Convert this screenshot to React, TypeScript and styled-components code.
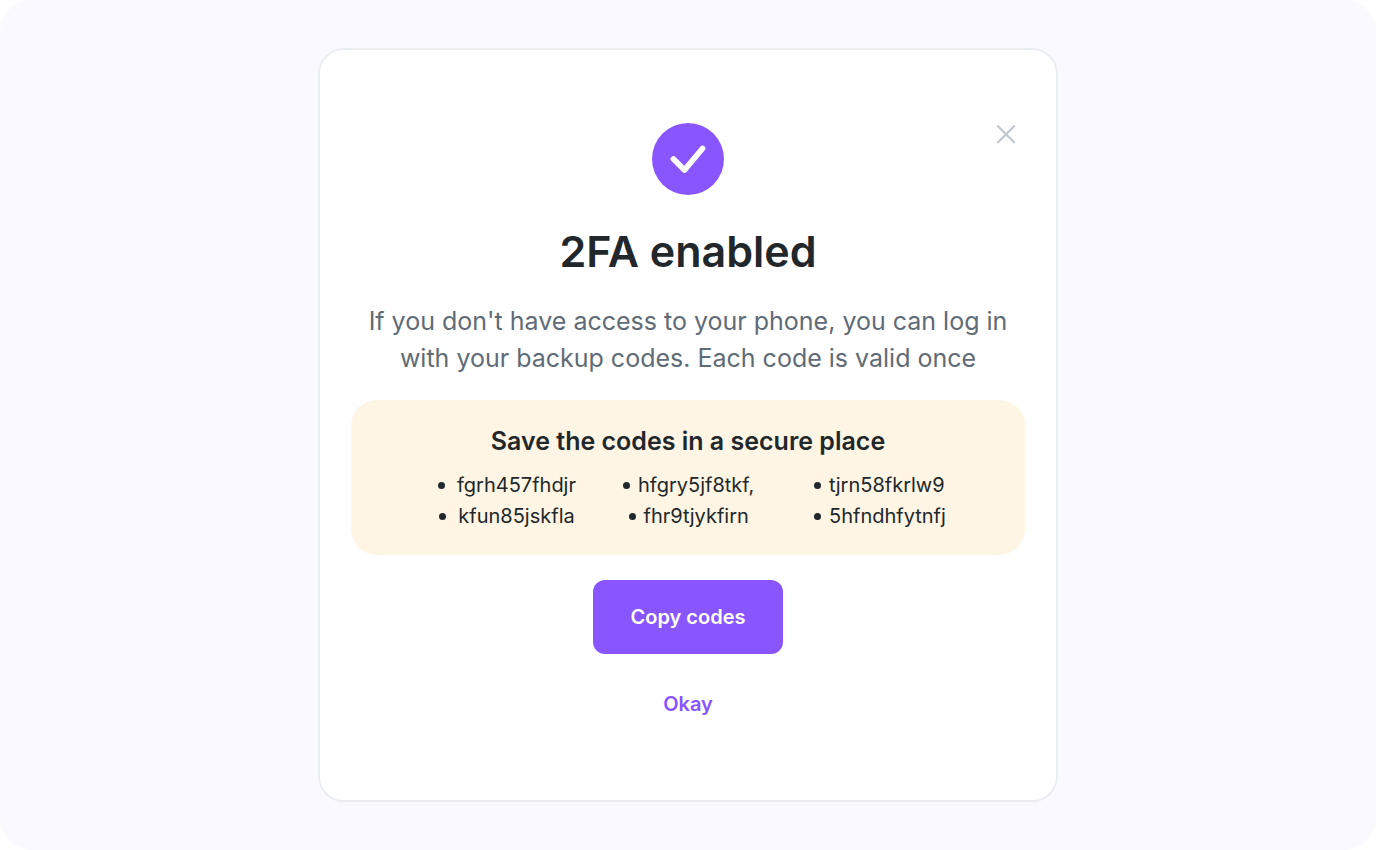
import React from "react";
import styled, { createGlobalStyle } from "styled-components";

const GlobalStyle = createGlobalStyle`
  * { box-sizing: border-box; }
  body { margin: 0; background: #fff; font-family: Inter, "Liberation Sans", sans-serif; color: #21272a; }
`;

const Page = styled.main`
  min-height: 100vh;
  padding: 48px 24px;
  display: flex;
  justify-content: center;
  align-items: flex-start;
  background: #faf9ff;
  border-radius: 32px;
`;

const Dialog = styled.section`
  position: relative;
  width: 100%;
  max-width: 740px;
  padding: 73px 31px 71px;
  display: flex;
  flex-direction: column;
  align-items: center;
  background: #fff;
  border: 2px solid #ebeef1;
  border-radius: 26px;
`;

const CloseButton = styled.button`
  position: absolute;
  top: 71px;
  right: 37px;
  width: 26px;
  height: 26px;
  padding: 0;
  border: 0;
  background: none;
  color: #c3c9d0;
  cursor: pointer;
  svg { display: block; }
`;

const Title = styled.h1`
  margin: 30px 0 0;
  font-size: 43px;
  line-height: 52px;
  font-weight: 600;
`;

const Description = styled.p`
  max-width: 640px;
  margin: 26px 0 23px;
  font-size: 25px;
  line-height: 37px;
  text-align: center;
  color: #5f6b76;
`;

const CodesPanel = styled.div`
  width: 100%;
  padding: 25px 76px 23px;
  background: #fff5e4;
  border-radius: 26px;
`;

const PanelTitle = styled.h2`
  margin: 0 0 13px;
  font-size: 25px;
  line-height: 32px;
  font-weight: 600;
  text-align: center;
`;

const CodeColumns = styled.div`
  display: grid;
  grid-template-columns: 185fr 191fr 135fr;
  justify-items: start;
  padding-left: 11px;
`;

const CodeList = styled.ul<{ $align: "center" | "flex-start" }>`
  display: flex;
  flex-direction: column;
  align-items: ${(p) => p.$align};
  margin: 0;
  padding: 0;
  list-style: none;
`;

const Code = styled.li<{ $gap: number }>`
  display: flex;
  align-items: center;
  gap: ${(p) => p.$gap}px;
  font-size: 20px;
  line-height: 31px;
  &::before {
    content: "";
    width: 7px;
    height: 7px;
    border-radius: 50%;
    background: currentColor;
  }
`;

const Button = styled.button<{ $primary?: boolean }>`
  min-width: 190px;
  padding: ${(p) => (p.$primary ? "24px" : "12px 24px")};
  border: 0;
  border-radius: 12px;
  background: ${(p) => (p.$primary ? "#8855ff" : "transparent")};
  color: ${(p) => (p.$primary ? "#fff" : "#8855ff")};
  font: 600 20px/26px Inter, "Liberation Sans", sans-serif;
  cursor: pointer;
`;

const Actions = styled.div`
  display: flex;
  flex-direction: column;
  gap: 25px;
  margin-top: 25px;
`;

const columns = [
  { gap: 12, align: "center", codes: ["fgrh457fhdjr", "kfun85jskfla"] },
  { gap: 8, align: "center", codes: ["hfgry5jf8tkf,", "fhr9tjykfirn"] },
  { gap: 8, align: "flex-start", codes: ["tjrn58fkrlw9", "5hfndhfytnfj"] },
] as const;

export default function App() {
  return (
    <>
      <GlobalStyle />
      <Page>
        <Dialog role="dialog" aria-labelledby="title">
          <CloseButton type="button" aria-label="Close">
            <svg width="26" height="26" viewBox="0 0 26 26" fill="none" stroke="currentColor" strokeWidth="2.3" strokeLinecap="round">
              <path d="M5 5.2L21 21.2M21 5.2L5 21.2" />
            </svg>
          </CloseButton>
          <svg width="72" height="72" viewBox="0 0 72 72" fill="none" aria-hidden="true">
            <circle cx="36" cy="36" r="36" fill="#8855ff" />
            <path d="M21.5 36L32.5 47L50.5 25.5" stroke="#fff" strokeWidth="5.8" strokeLinecap="round" strokeLinejoin="round" />
          </svg>
          <Title id="title">2FA enabled</Title>
          <Description>If you don't have access to your phone, you can log in with your backup codes. Each code is valid once</Description>
          <CodesPanel>
            <PanelTitle>Save the codes in a secure place</PanelTitle>
            <CodeColumns>
              {columns.map((column) => (
                <CodeList key={column.codes[0]} $align={column.align}>
                  {column.codes.map((code) => (
                    <Code key={code} $gap={column.gap}>{code}</Code>
                  ))}
                </CodeList>
              ))}
            </CodeColumns>
          </CodesPanel>
          <Actions>
            <Button type="button" $primary>Copy codes</Button>
            <Button type="button">Okay</Button>
          </Actions>
        </Dialog>
      </Page>
    </>
  );
}
